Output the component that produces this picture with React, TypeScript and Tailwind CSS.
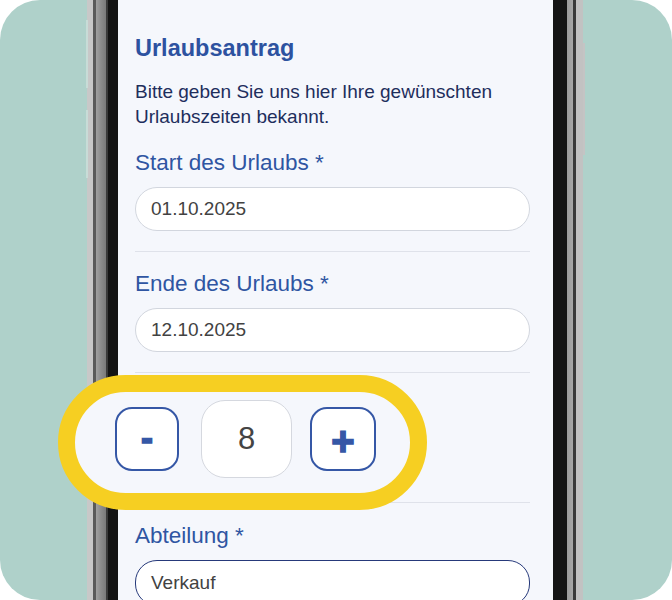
import React from "react";

function Field({
  label,
  value,
  focused = false,
  last = false,
}: {
  label: string;
  value: string;
  focused?: boolean;
  last?: boolean;
}) {
  return (
    <div
      className={
        last ? "pt-[19px]" : "pt-[18px] pb-[20px] border-b border-[#dfe2ea]"
      }
    >
      <p className="text-[22.5px] leading-[28px] text-[#2f55a2]">{label}</p>
      <div
        className={
          focused
            ? "mt-[10px] h-[46px] rounded-[22px] bg-white border-[1.5px] border-[#26397a] flex items-center px-[15px]"
            : "mt-[10px] h-[44px] rounded-[22px] bg-white border border-[#d2d6de] flex items-center px-[15px]"
        }
      >
        <span className="text-[19px] text-[#424242]">{value}</span>
      </div>
    </div>
  );
}

function Stepper() {
  return (
    <div className="flex items-center pb-[7px] pl-[40px] h-full">
      <button className="w-[64px] h-[64px] rounded-[17px] border-[2.5px] border-[#3557a6] bg-white flex items-center justify-center text-[36px] font-bold text-[#3557a6] leading-none pb-[2px] [-webkit-text-stroke:1.5px_#3557a6]">
        -
      </button>
      <div className="ml-[22px] w-[91px] h-[78px] rounded-[24px] border-[1.5px] border-[#d5d8df] bg-white flex items-center justify-center text-[31px] text-[#444444]">
        8
      </div>
      <button className="ml-[18px] w-[66px] h-[64px] rounded-[17px] border-[2.5px] border-[#3557a6] bg-white flex items-center justify-center text-[40px] font-bold text-[#3557a6] leading-none pt-[3px] [-webkit-text-stroke:1.5px_#3557a6]">
        +
      </button>
    </div>
  );
}

export default function App() {
  return (
    <div
      className="w-[672px] h-[600px] bg-white"
      style={{ fontFamily: '"Liberation Sans", Arial, sans-serif' }}
    >
      <div className="relative w-full h-full rounded-[40px] bg-[#afd1ca] overflow-hidden">
        {/* side buttons */}
        <div className="absolute left-[86px] top-[20px] w-[2px] h-[68px] bg-[#c8dcd7]" />
        <div className="absolute left-[86px] top-[110px] w-[2px] h-[68px] bg-[#c8dcd7]" />
        <div className="absolute left-[583px] top-[43px] w-[2px] h-[112px] bg-[#c4c4c4]" />

        <div className="ml-[87px] w-[496px] h-full flex">
          <div className="w-[31px] h-full bg-[linear-gradient(to_right,#c8c8c8_0px,#c8c8c8_6px,#5a5a5a_6px,#5a5a5a_9px,#a0a0a0_9px,#8c8c8c_14px,#7a7a7a_19px,#3a3a3a_19px,#3a3a3a_21px,#141414_21px,#141414_31px)]" />
          <div className="flex-1 h-full bg-[#f5f7fc] pl-[17px] pr-[23px] pt-[33px]">
            <h1 className="text-[23.5px] leading-[30px] font-bold text-[#2d52a0]">
              Urlaubsantrag
            </h1>
            <p className="mt-[16px] text-[19px] leading-[25px] text-[#1e2e5c]">
              Bitte geben Sie uns hier Ihre gewünschten Urlaubszeiten bekannt.
            </p>
            <div className="mt-[20px]">
              <p className="text-[22.5px] leading-[28px] text-[#2f55a2]">
                Start des Urlaubs *
              </p>
              <div className="mt-[10px] h-[44px] rounded-[22px] bg-white border border-[#d2d6de] flex items-center px-[15px]">
                <span className="text-[19px] text-[#424242]">01.10.2025</span>
              </div>
              <div className="mt-[20px] border-b border-[#dfe2ea]" />
            </div>
            <Field label="Ende des Urlaubs *" value="12.10.2025" />
            <div className="h-[130px] border-b border-[#dfe2ea]" />
            <Field label="Abteilung *" value="Verkauf" focused last />
          </div>
          <div className="w-[30px] h-full bg-[linear-gradient(to_right,#141414_0px,#141414_14px,#9a9a9a_14px,#a8a8a8_20px,#3a3a3a_20px,#3a3a3a_23px,#c2c2c2_23px,#c2c2c2_30px)]" />
        </div>

        {/* highlight callout */}
        <div className="absolute left-[58px] top-[375px] w-[369px] h-[135px] rounded-full border-[17px] border-[#f6cf22] bg-[#f5f7fc]">
          <Stepper />
        </div>
      </div>
    </div>
  );
}
